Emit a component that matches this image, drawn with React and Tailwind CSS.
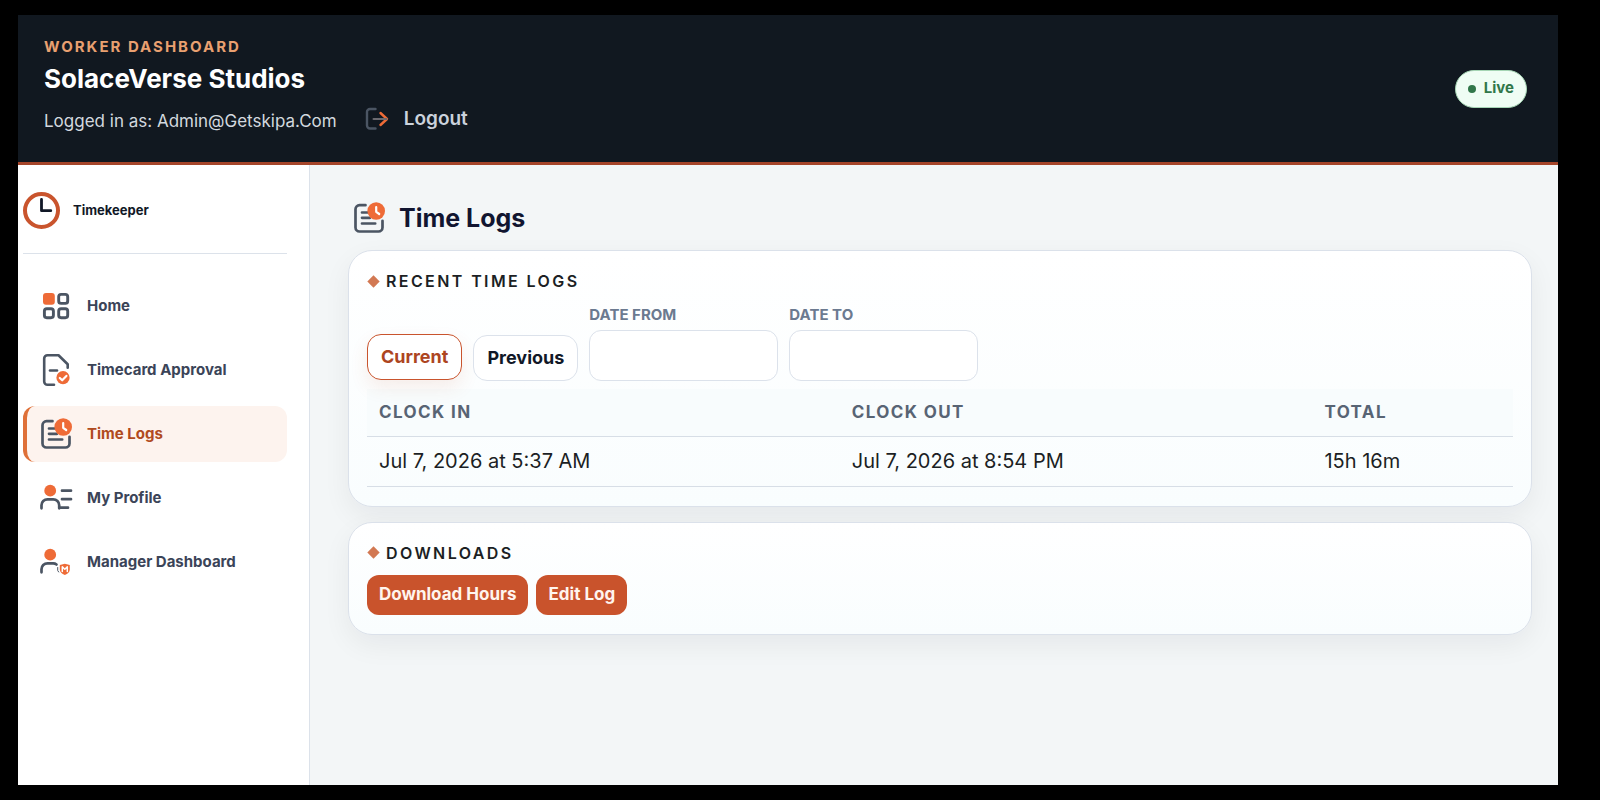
import React from "react";

const INK = "#4b5563";
const ACCENT = "#ee6b37";

function LogoutIcon() {
  return (
    <svg width="24" height="24" viewBox="0 0 24 24" fill="none" strokeWidth="2.400" strokeLinecap="round" strokeLinejoin="round" aria-hidden="true">
      <path d="M10.500 2H5a3 3 0 0 0-3 3v13.500a3 3 0 0 0 3 3h5.500" stroke={INK} />
      <path d="M15.500 6l6.500 6-6.500 6" stroke={ACCENT} />
      <path d="M8.500 12H21.500" stroke="#6b6a70" strokeWidth="2" />
    </svg>
  );
}

function ClockLogo() {
  return (
    <svg className="shrink-0" width="37" height="37" viewBox="0 0 37 37" fill="none" aria-hidden="true">
      <circle cx="18.500" cy="18.500" r="16.500" stroke="#c9542d" strokeWidth="4" />
      <path d="M18.500 7.500v11.200h9.300" stroke="#111827" strokeWidth="2.800" strokeLinecap="round" strokeLinejoin="round" />
    </svg>
  );
}

function HomeIcon() {
  return (
    <svg width="34" height="34" viewBox="0 0 34 34" fill="none" stroke={INK} strokeWidth="2.900" aria-hidden="true">
      <rect x="4" y="4" width="11.800" height="11.800" rx="3" fill={ACCENT} stroke="none" />
      <rect x="19.700" y="5.400" width="9" height="9" rx="2.400" />
      <rect x="5.400" y="19.700" width="9" height="9" rx="2.400" />
      <rect x="19.700" y="19.700" width="9" height="9" rx="2.400" />
    </svg>
  );
}

function ApprovalIcon() {
  return (
    <svg width="34" height="34" viewBox="0 0 34 34" fill="none" strokeLinecap="round" strokeLinejoin="round" aria-hidden="true">
      <path d="M15 31.800H8.500a3.300 3.300 0 0 1-3.300-3.300V5.500A3.300 3.300 0 0 1 8.500 2.200H19.500l9.200 9v3.500" stroke={INK} strokeWidth="2.600" />
      <path d="M11 17.500h7" stroke={INK} strokeWidth="2.600" />
      <circle cx="24" cy="24.700" r="6.600" fill={ACCENT} />
      <path d="M20.800 25l2.400 2.300 4.200-4.400" stroke="#fff" strokeWidth="2.200" />
    </svg>
  );
}

function LogsIcon() {
  return (
    <svg className="shrink-0" width="34" height="34" viewBox="0 0 34 34" fill="none" strokeLinecap="round" strokeLinejoin="round" aria-hidden="true">
      <g stroke={INK} strokeWidth="2.700">
        <path d="M13.500 4.200H7.500a4 4 0 0 0-4 4v18.300a4 4 0 0 0 4 4h19a4 4 0 0 0 4-4V19.800" />
        <path d="M10 11.500h6M10 16.800h8M10 22.500h13.200" />
      </g>
      <circle cx="24.200" cy="10" r="8.800" fill={ACCENT} />
      <path d="M24.200 6v4.800l3 2.200" stroke="#fff" strokeWidth="2.200" />
    </svg>
  );
}

function ProfileIcon() {
  return (
    <svg width="34" height="34" viewBox="0 0 34 34" fill="none" strokeLinecap="round" aria-hidden="true">
      <circle cx="11.200" cy="9.700" r="5.900" fill={ACCENT} />
      <g stroke={INK} strokeWidth="2.700">
        <path d="M2.500 27.300v-3a6 6 0 0 1 6-6h5.700a6 6 0 0 1 6 6v3" />
        <path d="M23 9.700h9M23 18.200h9M21.500 26.700h7.500" />
      </g>
    </svg>
  );
}

function ManagerIcon() {
  return (
    <svg width="34" height="34" viewBox="0 0 34 34" fill="none" strokeLinecap="round" strokeLinejoin="round" aria-hidden="true">
      <circle cx="11.200" cy="9.700" r="5.900" fill={ACCENT} />
      <path d="M2.500 27.300v-3a6 6 0 0 1 6-6h5.700q1.800 0 3.300 1.200" stroke={INK} strokeWidth="2.700" />
      <path d="M18.700 22.500v3l1 1.500" stroke={INK} strokeWidth="1" />
      <path d="M25.800 18.700l5 1.400v4.400c0 2.800-2 4.300-5 5.500-3-1.200-5-2.700-5-5.500v-4.400z" fill={ACCENT} />
      <path d="M23.300 26.500v-4.700l2.500 2.400 2.500-2.400v4.700" stroke="#fff" strokeWidth="1.500" />
    </svg>
  );
}

const NAV = [
  { label: "Home", Icon: HomeIcon },
  { label: "Timecard Approval", Icon: ApprovalIcon },
  { label: "Time Logs", Icon: LogsIcon, active: true },
  { label: "My Profile", Icon: ProfileIcon },
  { label: "Manager Dashboard", Icon: ManagerIcon },
];

function NavItem({ label, Icon, active }) {
  return (
    <a
      href="#"
      aria-current={active ? "page" : undefined}
      className={
        "flex h-14 items-center gap-[14px] rounded-xl border-l-4 pl-3 text-[15px] font-bold " +
        (active ? "border-[#df7038] bg-[#fdf3ee] text-[#b04a20]" : "border-transparent text-[#3b4458]")
      }
    >
      <Icon />
      {label}
    </a>
  );
}

function Card({ title, children }) {
  return (
    <section className="rounded-3xl border border-[#dbe1ea] bg-linear-to-b from-white to-[#f9fdfe] px-[18px] pt-5 pb-[19px] shadow-[0_10px_28px_rgba(17,24,39,0.06)]">
      <h2 className="flex items-center gap-1.5 text-base leading-5 font-semibold tracking-[2.400px] text-[#1c1f24] uppercase">
        <svg width="13" height="13" viewBox="0 0 13 13" aria-hidden="true">
          <path d="M6.500 0.300l6.200 6.200-6.200 6.200L0.300 6.500z" fill="#d27852" />
        </svg>
        {title}
      </h2>
      {children}
    </section>
  );
}

function DateField({ id, label }) {
  return (
    <div className="flex flex-col gap-[5px]">
      <label htmlFor={id} className="text-[15px] leading-5 font-bold text-[#6b7a90] uppercase">{label}</label>
      <input id={id} type="text" className="h-[51px] w-[189px] rounded-xl border border-[#dce2eb] bg-white px-3 text-base" />
    </div>
  );
}

export default function App() {
  return (
    <div className="flex min-h-screen bg-black pt-[15px] pr-[42px] pb-[15px] pl-[18px] font-[Inter,sans-serif]">
      <div className="flex grow flex-col bg-[#f3f6f7]">
        <header className="flex items-center justify-between border-b-[3px] border-[#a5452a] bg-[#111820] py-[22px] pr-[31px] pl-[26px]">
          <div className="pb-[3px]">
            <p className="text-[15px] leading-5 font-bold tracking-[2px] text-[#e9a070] uppercase">Worker Dashboard</p>
            <h1 className="mt-1 text-[26px] leading-9 font-bold text-white">SolaceVerse Studios</h1>
            <div className="mt-1 flex items-center">
              <p className="pt-1 text-[17px] leading-8 text-[#d3d8df]">Logged in as: Admin@Getskipa.Com</p>
              <button type="button" className="ml-7 flex items-center gap-[15px] text-[19px] leading-8 font-semibold text-[#cbd2dc]">
                <LogoutIcon />
                Logout
              </button>
            </div>
          </div>
          <div className="flex h-[38px] items-center gap-2 rounded-full border border-[#a5d5b4] bg-[#effdf4] px-3 text-[15px] font-bold text-[#31774a]">
            <span className="size-2 rounded-full bg-[#31774a]" />
            Live
          </div>
        </header>

        <div className="flex grow">
          <aside className="w-[292px] shrink-0 border-r border-[#dce2ea] bg-white pt-[27px] pr-[22px] pl-[5px]">
            <div className="flex items-center gap-[13px] border-b border-[#dce2ea] pb-6 text-[13px] font-bold text-[#111827]">
              <ClockLogo />
              Timekeeper
            </div>
            <nav className="mt-6 flex flex-col gap-2">
              {NAV.map((item) => (
                <NavItem key={item.label} {...item} />
              ))}
            </nav>
          </aside>

          <main className="flex grow flex-col gap-[15px] pt-9 pr-[26px] pl-[38px]">
            <div className="flex h-[34px] items-center gap-[13px] pl-1">
              <LogsIcon />
              <h1 className="text-[25px] leading-8 font-bold text-[#111530]">Time Logs</h1>
            </div>

            <Card title="Recent Time Logs">
              <div className="mt-[14px] flex items-end gap-[11px]">
                <button type="button" className="mb-px h-[46px] rounded-[14px] border border-[#c9542d] bg-white px-[13px] text-lg font-bold text-[#ad451f] shadow-[0_8px_18px_rgba(201,84,45,0.1)]">Current</button>
                <button type="button" className="h-[46px] rounded-[14px] border border-[#dce2eb] bg-white px-[13px] text-lg font-bold text-[#111827]">Previous</button>
                <DateField id="date-from" label="Date From" />
                <DateField id="date-to" label="Date To" />
              </div>
              <table className="mt-2 w-full table-fixed border-collapse text-left">
                <colgroup>
                  <col className="w-[41.25%]" />
                  <col className="w-[41.25%]" />
                  <col />
                </colgroup>
                <thead className="bg-[#f8fcfd] text-[17px] leading-6 tracking-[1.400px] text-[#586474] uppercase">
                  <tr className="h-[47px] border-b border-[#d7dee6]">
                    <th className="px-3 pb-px font-bold">Clock In</th>
                    <th className="px-3 pb-px font-bold">Clock Out</th>
                    <th className="px-3 pb-px font-bold">Total</th>
                  </tr>
                </thead>
                <tbody className="text-[20px] leading-7 text-[#1c1f24]">
                  <tr className="h-[50px] border-b border-[#d7dee6]">
                    <td className="px-3">Jul 7, 2026 at 5:37 AM</td>
                    <td className="px-3">Jul 7, 2026 at 8:54 PM</td>
                    <td className="px-3">15h 16m</td>
                  </tr>
                </tbody>
              </table>
            </Card>

            <Card title="Downloads">
              <div className="mt-3 flex gap-2">
                <button type="button" className="h-10 rounded-xl bg-[#c9532c] px-3 text-[17px] font-bold text-[#fff5ee]">Download Hours</button>
                <button type="button" className="h-10 rounded-xl bg-[#c9532c] px-3 text-[17px] font-bold text-[#fff5ee]">Edit Log</button>
              </div>
            </Card>
          </main>
        </div>
      </div>
    </div>
  );
}
